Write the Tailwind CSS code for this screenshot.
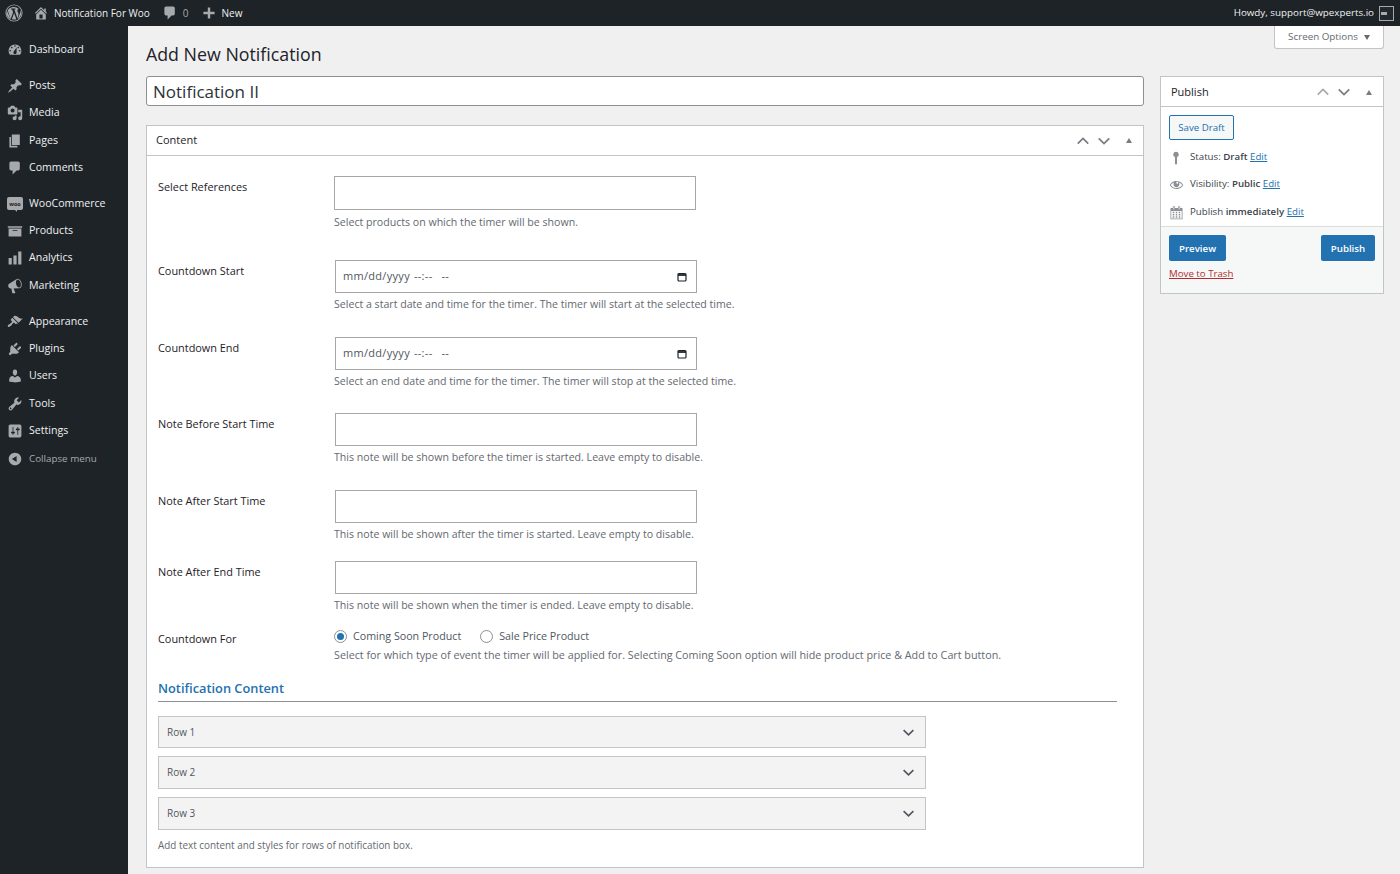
<!DOCTYPE html>
<html lang="en">
<head>
    <meta charset="UTF-8">
    <meta name="viewport" content="width=device-width, initial-scale=1.0">
    <title>Add New Notification</title>
    <script src="https://cdn.jsdelivr.net/npm/@tailwindcss/browser@4"></script>
</head>
<body class="h-[874px] overflow-hidden bg-[#f0f0f1] font-['Open_Sans',sans-serif] text-[10.6px] text-[#3c434a]">
    <!-- Admin bar -->
    <header class="flex h-[26px] items-center justify-between bg-[#1d2327] text-[10px] text-[#f0f0f1]">
        <div class="flex items-center">
            <svg class="ml-[5px] size-[18px] fill-[#a7aaad]" viewBox="0 0 20 20"><path fill-rule="evenodd" d="M10 .5a9.5 9.5 0 1 1 0 19 9.5 9.5 0 0 1 0-19zm0 1a8.500 8.500 0 1 0 0 17 8.500 8.500 0 0 0 0-17zM2.900 7l3.500 9.600L9 9.200 7.800 6H6.700V5.100h4.900V6h-1.200l3.400 9.900 1-3.100c.5-1.400.2-2.500-.4-3.600-.4-.7-.7-1.300-.7-2 0-.9.8-1.700 1.600-1.700A8 8 0 0 0 2.900 7zm7.200 3l-2.400 7a8 8 0 0 0 4.900-.1zm7.100-3.300c.2 1.500-.2 2.800-.7 4.200L14 17a8 8 0 0 0 3.200-10.300zM2.300 7.700A8 8 0 0 0 6.400 17.300z"/></svg>
            <svg class="ml-[10px] size-[16px] fill-[#a7aaad]" viewBox="0 0 20 20"><path d="M16 8.500l1.530 1.530-1.060 1.060L10 4.620l-6.470 6.470-1.060-1.060L10 2.500l4 4v-2h2v4zm-6-2.460l6 5.990V18H4v-5.970zM12 17v-5H8v5h4z"/></svg>
            <span class="ml-[5px]">Notification For Woo</span>
            <svg class="ml-[12px] size-[16px] fill-[#a7aaad]" viewBox="0 0 20 20"><path d="M5 2h9c1.100 0 2 .9 2 2v7c0 1.100-.9 2-2 2h-2l-5 5v-5H5c-1.100 0-2-.9-2-2V4c0-1.100.9-2 2-2z"/></svg>
            <span class="ml-[5px] text-[#a7aaad]">0</span>
            <svg class="ml-[12px] size-[16px] fill-[#a7aaad]" viewBox="0 0 20 20"><path d="M17 8.500v3h-5.500V17h-3v-5.500H3v-3h5.500V3h3v5.500z"/></svg>
            <span class="ml-[5px]">New</span>
        </div>
        <div class="mr-[6px] flex items-center">
            <span class="text-[9.800px]">Howdy, support@wpexperts.io</span>
            <span class="ml-[5px] flex h-[15px] w-[15px] items-center justify-start border border-[#a7aaad] bg-[#23282d] pl-px">
                <span class="h-[3px] w-[6px] bg-[#a7aaad]"></span>
            </span>
        </div>
    </header>

    <div class="flex h-[848px]">
        <!-- Sidebar -->
        <nav class="flex w-[128px] shrink-0 flex-col bg-[#1d2327] pt-[10.300px] text-[10.600px] text-[#f0f0f1]">
            <a class="flex h-[27.300px] items-center pl-[7px]"><svg class="mr-[6px] size-[16px] fill-[#a7aaad]" viewBox="0 0 20 20"><path d="M3.760 16h12.480c1.100-1.370 1.760-3.110 1.760-5 0-4.420-3.580-8-8-8s-8 3.580-8 8c0 1.890.66 3.630 1.760 5zM10 4c.55 0 1 .45 1 1s-.45 1-1 1-1-.45-1-1 .45-1 1-1zM6 6c.55 0 1 .45 1 1s-.45 1-1 1-1-.45-1-1 .45-1 1-1zm8 0c.55 0 1 .45 1 1s-.45 1-1 1-1-.45-1-1 .45-1 1-1zm-5.370 5.550L12 7v6c0 1.100-.9 2-2 2s-2-.9-2-2c0-.57.24-1.080.63-1.450zM4 10c.55 0 1 .45 1 1s-.45 1-1 1-1-.45-1-1 .45-1 1-1zm12 0c.55 0 1 .45 1 1s-.45 1-1 1-1-.45-1-1 .45-1 1-1z"/></svg>Dashboard</a>

            <a class="mt-[8.700px] flex h-[27.300px] items-center pl-[7px]"><svg class="mr-[6px] size-[16px] fill-[#a7aaad]" viewBox="0 0 20 20"><path d="M10.440 3.020l1.820-1.820 6.360 6.350-1.830 1.820c-1.050-.68-2.480-.57-3.410.36l-.75.75c-.92.93-1.040 2.350-.35 3.410l-1.830 1.820-2.410-2.410-2.800 2.790c-.42.42-3.380 2.710-3.800 2.290s1.860-3.390 2.280-3.810l2.790-2.790L4.100 9.360l1.830-1.820c1.050.69 2.480.57 3.400-.36l.75-.75c.93-.92 1.050-2.350.36-3.410z"/></svg>Posts</a>
            <a class="flex h-[27.300px] items-center pl-[7px]"><svg class="mr-[6px] size-[16px] fill-[#a7aaad]" viewBox="0 0 20 20"><path d="M13 11V4c0-.55-.45-1-1-1h-1.670L9 1H5L3.670 3H2c-.55 0-1 .45-1 1v7c0 .55.45 1 1 1h10c.55 0 1-.45 1-1zM7 4.500c1.380 0 2.500 1.120 2.500 2.500S8.380 9.500 7 9.500 4.500 8.380 4.500 7 5.620 4.500 7 4.500zM14 6h5v10.500c0 1.380-1.120 2.500-2.500 2.500S14 17.880 14 16.500s1.120-2.500 2.500-2.500c.17 0 .34.02.5.05V9h-3V6zm-4 8.050V13h2v3.500c0 1.380-1.120 2.500-2.500 2.500S7 17.880 7 16.500 8.120 14 9.500 14c.17 0 .34.02.5.05z"/></svg>Media</a>
            <a class="flex h-[27.300px] items-center pl-[7px]"><svg class="mr-[6px] size-[16px] fill-[#a7aaad]" viewBox="0 0 20 20"><path d="M6 15V2h10v13H6zm-1 1h8v2H3V5h2v11z"/></svg>Pages</a>
            <a class="flex h-[27.300px] items-center pl-[7px]"><svg class="mr-[6px] size-[16px] fill-[#a7aaad]" viewBox="0 0 20 20"><path d="M5 2h9c1.100 0 2 .9 2 2v7c0 1.100-.9 2-2 2h-2l-5 5v-5H5c-1.100 0-2-.9-2-2V4c0-1.100.9-2 2-2z"/></svg>Comments</a>

            <a class="mt-[8.700px] flex h-[27.300px] items-center pl-[7px]"><span class="relative mr-[6px] flex h-[13px] w-[16px] items-center justify-center rounded-[2px] bg-[#a7aaad] text-[5.500px] font-bold text-[#1d2327]">woo<span class="absolute -bottom-[2px] left-[7px] h-0 w-0 border-l-[3px] border-t-[3px] border-l-transparent border-t-[#a7aaad]"></span></span>WooCommerce</a>
            <a class="flex h-[27.300px] items-center pl-[7px]"><svg class="mr-[6px] size-[16px] fill-[#a7aaad]" viewBox="0 0 20 20"><path d="M19 4v2H1V4h18zM2 7h16v10H2V7zm11 3V9H7v1h6z"/></svg>Products</a>
            <a class="flex h-[27.300px] items-center pl-[7px]"><svg class="mr-[6px] size-[16px] fill-[#a7aaad]" viewBox="0 0 20 20"><path d="M18 18V2h-4v16h4zm-6 0V7H8v11h4zm-6 0v-8H2v8h4z"/></svg>Analytics</a>
            <a class="flex h-[27.300px] items-center pl-[7px]"><svg class="mr-[6px] size-[16px] fill-[#a7aaad]" viewBox="0 0 20 20"><path d="M18.150 5.940c.46 1.620.38 3.220-.02 4.480-.42 1.280-1.260 2.180-2.300 2.480-.16.06-.26.06-.4.06l-7.200.1 2.220 5.500c.02.14-.6.26-.14.34-.08.1-.24.16-.34.16H6.950c-.1 0-.26-.06-.34-.16-.08-.08-.16-.2-.14-.34l-1-5.500H4.250c-.5.06-1.080-.18-1.540-.62s-.88-1.080-1.060-1.880c-.24-.8-.2-1.560-.02-2.200.18-.62.58-1.080 1.060-1.300l9-5.420c.24-.16.46-.28.98-.46 1.040-.3 2.240.1 3.220.98s1.840 2.240 2.260 3.860zm-2.580 5.980c1.500-.4 2.300-2.700 1.600-5.720-.8-3-2.700-4.600-4.240-4.100-1.500.4-2.300 2.800-1.500 5.740.8 3 2.600 4.500 4.140 4.080z"/></svg>Marketing</a>

            <a class="mt-[8.700px] flex h-[27.300px] items-center pl-[7px]"><svg class="mr-[6px] size-[16px] fill-[#a7aaad]" viewBox="0 0 20 20"><path d="M14.480 11.060L7.410 3.990l1.500-1.500c.5-.56 2.300-.47 3.510.32 1.210.8 1.430 1.280 2.910 2.100 1.180.64 2.450 1.260 4.450.85zm-.71.71L6.700 4.700 4.930 6.470c-.39.39-.39 1.020 0 1.410l1.060 1.060c.39.39.39 1.030 0 1.420-.6.6-1.430 1.110-2.210 1.690-.35.26-.7.53-1.010.84C1.430 13.230.4 14.910 1.300 15.800c.9.89 2.570-.13 3.910-1.470.31-.31.58-.66.84-1.010.58-.78 1.090-1.610 1.690-2.210.39-.39 1.020-.39 1.410 0l1.060 1.060c.39.39 1.020.39 1.410 0z"/></svg>Appearance</a>
            <a class="flex h-[27.300px] items-center pl-[7px]"><svg class="mr-[6px] size-[16px] fill-[#a7aaad]" viewBox="0 0 20 20"><path d="M13.110 4.360L9.870 7.600 8 5.730l3.240-3.240c.35-.34 1.050-.2 1.560.32.52.51.66 1.210.31 1.550zm-8 1.770l.91-1.120 9.010 9.010-1.190.84c-.71.71-2.630 1.160-3.820 1.160H6.140L4.900 17.260c-.59.59-1.540.59-2.120 0-.59-.58-.59-1.530 0-2.120l1.240-1.240v-3.880c0-1.130.4-3.190 1.090-3.890zm7.260 3.970l3.240-3.240c.34-.35 1.040-.21 1.550.31.52.51.66 1.210.31 1.550l-3.240 3.250z"/></svg>Plugins</a>
            <a class="flex h-[27.300px] items-center pl-[7px]"><svg class="mr-[6px] size-[16px] fill-[#a7aaad]" viewBox="0 0 20 20"><path d="M10 9.250c-2.270 0-2.730-3.440-2.730-3.440C7 4.020 7.820 2 9.970 2c2.160 0 2.980 2.020 2.710 3.810 0 0-.41 3.440-2.680 3.440zm0 2.570L12.720 10c2.390 0 4.520 2.330 4.520 4.530v2.490s-3.650 1.130-7.240 1.130c-3.650 0-7.240-1.130-7.240-1.130v-2.490c0-2.250 1.940-4.480 4.470-4.480z"/></svg>Users</a>
            <a class="flex h-[27.300px] items-center pl-[7px]"><svg class="mr-[6px] size-[16px] fill-[#a7aaad]" viewBox="0 0 20 20"><path d="M16.680 9.770c-1.340 1.340-3.300 1.670-4.950.99l-5.410 6.520c-.99.99-2.590.99-3.580 0s-.99-2.590 0-3.570l6.520-5.420c-.68-1.650-.35-3.610.99-4.950 1.280-1.280 3.120-1.620 4.720-1.060l-2.890 2.890 2.820 2.820 2.860-2.870c.53 1.580.18 3.390-1.080 4.650zM3.810 16.210c.4.39 1.040.39 1.430 0 .4-.4.4-1.040 0-1.430-.39-.4-1.030-.4-1.430 0-.39.39-.39 1.030 0 1.430z"/></svg>Tools</a>
            <a class="flex h-[27.300px] items-center pl-[7px]"><svg class="mr-[6px] size-[16px] fill-[#a7aaad]" viewBox="0 0 20 20"><path d="M18 16V4c0-1.100-.9-2-2-2H4c-1.100 0-2 .9-2 2v12c0 1.100.9 2 2 2h12c1.100 0 2-.9 2-2zM8 11h1c.55 0 1 .45 1 1s-.45 1-1 1H8v1.500c0 .28-.22.5-.5.5s-.5-.22-.5-.5V13H6c-.55 0-1-.45-1-1s.45-1 1-1h1V5.500c0-.28.22-.5.5-.5s.5.22.5.5V11zm5-2h-1c-.55 0-1-.45-1-1s.45-1 1-1h1V5.500c0-.28.22-.5.5-.5s.5.22.5.5V7h1c.55 0 1 .45 1 1s-.45 1-1 1h-1v5.500c0 .28-.22.5-.5.5s-.5-.22-.5-.5V9z"/></svg>Settings</a>
            <a class="mt-px flex h-[27.300px] items-center pl-[7px] text-[9.800px] text-[#a7aaad]"><svg class="mr-[6px] size-[16px] fill-[#a7aaad]" viewBox="0 0 20 20"><path d="M10 2.160c4.330 0 7.840 3.510 7.840 7.840s-3.510 7.840-7.840 7.840S2.160 14.330 2.160 10 5.710 2.160 10 2.160zm2 11.720V6.120L6.180 9.970z"/></svg>Collapse menu</a>
        </nav>

        <!-- Main -->
        <main class="relative flex-1 pl-[18px] pr-[16px]">
            <button class="absolute right-[16px] top-0 flex h-[23px] w-[110px] items-center justify-center gap-[6px] rounded-b-[3px] border border-t-0 border-[#c3c4c7] bg-white pt-px text-[9.800px] text-[#646970]">Screen Options <span class="h-0 w-0 border-x-[3.500px] border-t-[5px] border-x-transparent border-t-[#646970]"></span></button>

            <h1 class="pt-[15px] text-[17.800px] leading-[26px] text-[#1d2327]">Add New Notification</h1>

            <div class="mt-[9px] flex gap-[16px]">
                <div class="w-[998px] shrink-0">
                    <div class="flex h-[30px] items-center rounded-[3px] border border-[#8c8f94] bg-white pl-[6px] pt-[2px] text-[17px] text-[#2c3338]">Notification II</div>

                    <section class="mt-[19px] h-[743px] border border-[#c3c4c7] bg-white">
                        <div class="flex h-[30px] items-center justify-between border-b border-[#c3c4c7] pl-[9px] pr-[11px] text-[11px] text-[#1d2327]">
                            <span>Content</span>
                            <span class="flex items-center">
                                <svg class="size-[14px] fill-none stroke-[#787c82] stroke-2" viewBox="0 0 16 16"><path d="M2 11l6-6 6 6"/></svg>
                                <svg class="ml-[7px] size-[14px] fill-none stroke-[#787c82] stroke-2" viewBox="0 0 16 16"><path d="M2 5l6 6 6-6"/></svg>
                                <span class="ml-[15px] h-0 w-0 border-x-[3.500px] border-b-[5px] border-x-transparent border-b-[#787c82]"></span>
                            </span>
                        </div>

                        <div class="pl-[11px] pr-[26px]">
                            <div class="flex h-[104px] pt-[20px]">
                                <label class="w-[176px] shrink-0 pt-[3px] text-[10.900px] text-[#1d2327]">Select References</label>
                                <div>
                                    <div class="h-[34px] w-[362px] border border-[#a7a7a7] bg-white"></div>
                                    <p class="mt-[5px] text-[#646970]">Select products on which the timer will be shown.</p>
                                </div>
                            </div>

                            <div class="flex h-[77px]">
                                <label class="w-[177px] shrink-0 pt-[3px] text-[10.900px] text-[#1d2327]">Countdown Start</label>
                                <div>
                                    <div class="flex h-[33px] w-[362px] items-center justify-between border border-[#a7a7a7] bg-white pl-[7px] pr-[9px] text-[11px] tracking-[0.3px] text-[#50575e]"><span class="flex gap-[4px]"><span>mm/dd/yyyy</span><span>--:--</span><span class="ml-[5px]">--</span></span><svg class="size-[10px] fill-none stroke-[#1d2327]" viewBox="0 0 10 10"><rect x="1" y="1.500" width="8" height="7.500" rx="1" stroke-width="1.200"/><path d="M1 3h8" stroke-width="1.800"/></svg></div>
                                    <p class="-ml-px mt-[4px] text-[#646970]">Select a start date and time for the timer. The timer will start at the selected time.</p>
                                </div>
                            </div>

                            <div class="flex h-[76px]">
                                <label class="w-[177px] shrink-0 pt-[3px] text-[10.900px] text-[#1d2327]">Countdown End</label>
                                <div>
                                    <div class="flex h-[33px] w-[362px] items-center justify-between border border-[#a7a7a7] bg-white pl-[7px] pr-[9px] text-[11px] tracking-[0.3px] text-[#50575e]"><span class="flex gap-[4px]"><span>mm/dd/yyyy</span><span>--:--</span><span class="ml-[5px]">--</span></span><svg class="size-[10px] fill-none stroke-[#1d2327]" viewBox="0 0 10 10"><rect x="1" y="1.500" width="8" height="7.500" rx="1" stroke-width="1.200"/><path d="M1 3h8" stroke-width="1.800"/></svg></div>
                                    <p class="-ml-px mt-[4px] text-[#646970]">Select an end date and time for the timer. The timer will stop at the selected time.</p>
                                </div>
                            </div>

                            <div class="flex h-[77px]">
                                <label class="w-[177px] shrink-0 pt-[3px] text-[10.900px] text-[#1d2327]">Note Before Start Time</label>
                                <div>
                                    <div class="h-[33px] w-[362px] border border-[#a7a7a7] bg-white"></div>
                                    <p class="-ml-px mt-[4px] text-[#646970]">This note will be shown before the timer is started. Leave empty to disable.</p>
                                </div>
                            </div>

                            <div class="flex h-[71px]">
                                <label class="w-[177px] shrink-0 pt-[3px] text-[10.900px] text-[#1d2327]">Note After Start Time</label>
                                <div>
                                    <div class="h-[33px] w-[362px] border border-[#a7a7a7] bg-white"></div>
                                    <p class="-ml-px mt-[4px] text-[#646970]">This note will be shown after the timer is started. Leave empty to disable.</p>
                                </div>
                            </div>

                            <div class="flex h-[67px]">
                                <label class="w-[177px] shrink-0 pt-[3px] text-[10.900px] text-[#1d2327]">Note After End Time</label>
                                <div>
                                    <div class="h-[33px] w-[362px] border border-[#a7a7a7] bg-white"></div>
                                    <p class="-ml-px mt-[4px] text-[#646970]">This note will be shown when the timer is ended. Leave empty to disable.</p>
                                </div>
                            </div>

                            <div class="flex h-[50px]">
                                <label class="w-[176px] shrink-0 pt-[3px] text-[10.900px] text-[#1d2327]">Countdown For</label>
                                <div>
                                    <div class="flex h-[16px] items-center text-[10.700px] text-[#50575e]">
                                        <span class="flex size-[13px] items-center justify-center rounded-full border border-[#8c8f94]"><span class="size-[7px] rounded-full bg-[#2271b1]"></span></span>
                                        <span class="ml-[6px]">Coming Soon Product</span>
                                        <span class="ml-[19px] size-[13px] rounded-full border border-[#8c8f94]"></span>
                                        <span class="ml-[6px]">Sale Price Product</span>
                                    </div>
                                    <p class="mt-[3px] text-[10.750px] text-[#646970]">Select for which type of event the timer will be applied for. Selecting Coming Soon option will hide product price &amp; Add to Cart button.</p>
                                </div>
                            </div>

                            <h2 class="border-b border-[#8c8f94] pb-[3px] text-[12.800px] font-semibold leading-[20px] text-[#2271b1]">Notification Content</h2>

                            <div class="mt-[14px] flex w-[768px] flex-col gap-[8px] text-[10px] text-[#50575e]">
                                <div class="flex h-[32px] items-center justify-between border border-[#c3c4c7] bg-[#f3f3f3] pl-[8px] pr-[10px]">Row 1<svg class="size-[13px] fill-none stroke-[#50575e] stroke-2" viewBox="0 0 16 16"><path d="M2 5l6 6 6-6"/></svg></div>
                                <div class="flex h-[33px] items-center justify-between border border-[#c3c4c7] bg-[#f3f3f3] pl-[8px] pr-[10px]">Row 2<svg class="size-[13px] fill-none stroke-[#50575e] stroke-2" viewBox="0 0 16 16"><path d="M2 5l6 6 6-6"/></svg></div>
                                <div class="flex h-[33px] items-center justify-between border border-[#c3c4c7] bg-[#f3f3f3] pl-[8px] pr-[10px]">Row 3<svg class="size-[13px] fill-none stroke-[#50575e] stroke-2" viewBox="0 0 16 16"><path d="M2 5l6 6 6-6"/></svg></div>
                            </div>
                            <p class="mt-[8px] text-[9.900px] text-[#646970]">Add text content and styles for rows of notification box.</p>
                        </div>
                    </section>
                </div>

                <!-- Publish box -->
                <aside class="h-[218px] w-[224px] shrink-0 border border-[#c3c4c7] bg-white text-[9.700px]">
                    <div class="flex h-[30px] items-center justify-between border-b border-[#c3c4c7] pl-[10px] pr-[11px] pt-px text-[11px] text-[#1d2327]">
                        <span>Publish</span>
                        <span class="flex items-center">
                            <svg class="size-[14px] fill-none stroke-[#a7aaad] stroke-2" viewBox="0 0 16 16"><path d="M2 11l6-6 6 6"/></svg>
                            <svg class="ml-[7px] size-[14px] fill-none stroke-[#787c82] stroke-2" viewBox="0 0 16 16"><path d="M2 5l6 6 6-6"/></svg>
                            <span class="ml-[15px] h-0 w-0 border-x-[3.500px] border-b-[5px] border-x-transparent border-b-[#787c82]"></span>
                        </span>
                    </div>
                    <div class="h-[119px] pl-[8px] pt-[8px]">
                        <button class="h-[25px] w-[65px] rounded-[2px] border border-[#2271b1] bg-[#f6f7f7] pt-px text-[#2271b1]">Save Draft</button>
                        <div class="mt-[4px] flex h-[27px] items-center">
                            <svg class="w-[14px] h-[14px] fill-[#8c8f94]" viewBox="0 0 20 20"><path d="M10 1a4 4 0 0 1 1.500 7.700V18l-1.500 2-1.500-2V8.700A4 4 0 0 1 10 1z"/></svg>
                            <span class="ml-[7px]">Status: <span class="font-semibold">Draft</span> <a class="text-[#2271b1] underline">Edit</a></span>
                        </div>
                        <div class="flex h-[27px] items-center">
                            <svg class="w-[15px] h-[15px] fill-[#8c8f94]" viewBox="0 0 20 20"><path d="M18.300 9.500C15 4.900 8.500 3.800 3.900 7.200c-1.200.9-2.200 2.100-3 3.400.2.400.5.800.8 1.200 3.300 4.600 9.600 5.600 14.200 2.400 1-.7 1.800-1.600 2.400-2.400.3-.4.500-.8.800-1.200-.2-.4-.5-.7-.8-1.100zm-8.200-2.800c.5-.5 1.300-.5 1.800 0s.5 1.300 0 1.800-1.300.5-1.800 0-.5-1.300 0-1.800zm-.1 8.100c-3.100 0-6-1.600-7.700-4.200C3.500 9 5.100 7.800 7 7.200c-.7.700-1 1.500-1 2.400 0 2.200 1.700 4 3.900 4 2.200 0 4-1.700 4-3.900 0-.9-.3-1.800-.9-2.500 1.900.6 3.500 1.800 4.700 3.500-1.700 2.600-4.600 4.100-7.700 4.100z"/></svg>
                            <span class="ml-[6px]">Visibility: <span class="font-semibold">Public</span> <a class="text-[#2271b1] underline">Edit</a></span>
                        </div>
                        <div class="mt-px flex h-[27px] items-center">
                            <svg class="w-[15px] h-[15px] fill-[#8c8f94]" viewBox="0 0 20 20"><path d="M15 4h3v15H2V4h3V3c0-.41.15-.76.44-1.060.29-.29.65-.44 1.060-.44s.77.15 1.060.44c.29.3.44.65.44 1.060v1h4V3c0-.41.15-.76.44-1.060.29-.29.65-.44 1.060-.44s.77.15 1.060.44c.29.3.44.65.44 1.060v1zM6 3v2.500c0 .14.05.26.15.35.09.1.21.15.35.15s.26-.05.35-.15c.1-.09.15-.21.15-.35V3c0-.14-.05-.26-.15-.35-.09-.1-.21-.15-.35-.15s-.26.05-.35.15c-.1.09-.15.21-.15.35zm7 0v2.500c0 .14.05.26.14.35.1.1.22.15.36.15s.26-.05.36-.15c.09-.09.14-.21.14-.35V3c0-.14-.05-.26-.14-.35-.1-.1-.22-.15-.36-.15s-.26.05-.36.15c-.09.09-.14.21-.14.35zm4 15V8H3v10h14zM7 9v2H5V9h2zm2 0h2v2H9V9zm4 2V9h2v2h-2zm-6 1v2H5v-2h2zm2 0h2v2H9v-2zm4 2v-2h2v2h-2zm-6 1v2H5v-2h2zm4 2H9v-2h2v2zm4 0h-2v-2h2v2z"/></svg>
                            <span class="ml-[6px]">Publish <span class="font-semibold">immediately</span> <a class="text-[#2271b1] underline">Edit</a></span>
                        </div>
                    </div>
                    <div class="h-[67px] border-t border-[#dcdcde] bg-[#f6f7f7] px-[8px] pt-[8px]">
                        <div class="flex justify-between">
                            <button class="h-[26px] w-[57px] rounded-[2px] bg-[#2271b1] pt-[2px] font-semibold text-white">Preview</button>
                            <button class="h-[26px] w-[54px] rounded-[2px] bg-[#2271b1] pt-[2px] font-semibold text-white">Publish</button>
                        </div>
                        <a class="mt-[6px] block text-[#b32d2e] underline">Move to Trash</a>
                    </div>
                </aside>
            </div>
        </main>
    </div>
</body>
</html>
